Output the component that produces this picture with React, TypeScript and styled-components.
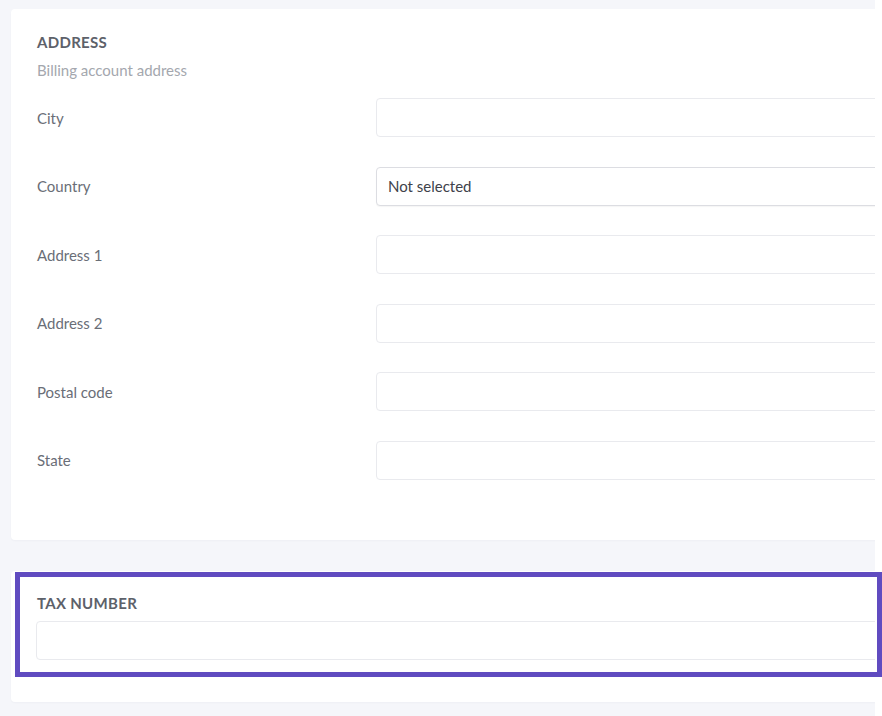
import React from "react";
import styled, { createGlobalStyle } from "styled-components";

const GlobalStyle = createGlobalStyle`
	html, body {
		margin: 0;
		padding: 0;
		background: #ffffff;
	}
	body {
		font-family: Lato, "Open Sans", "Liberation Sans", sans-serif;
		-webkit-font-smoothing: antialiased;
	}
`;

const Root = styled.div`
	position: relative;
	width: 882px;
	height: 716px;
	overflow: hidden;
`;

const Page = styled.div`
	box-sizing: border-box;
	width: 875px;
	height: 716px;
	padding: 9px 0 0 11px;
	background: #f5f6fa;
	overflow: hidden;
	display: flex;
	flex-direction: column;
`;

const Card = styled.section<{ $top: number; $bottom: number; $gap?: number }>`
	box-sizing: border-box;
	margin-right: -40px;
	margin-top: ${(p) => p.$gap ?? 0}px;
	padding: ${(p) => p.$top}px 0 ${(p) => p.$bottom}px 26px;
	background: #ffffff;
	border-radius: 4px;
	box-shadow: 0 1px 2px rgba(30, 40, 70, 0.03);
`;

const Title = styled.h2`
	margin: 0;
	font-size: 15px;
	line-height: 20px;
	font-weight: 700;
	letter-spacing: 0.3px;
	color: #5d616a;
	text-transform: uppercase;
`;

const Subtitle = styled.p`
	margin: 8px 0 18px;
	font-size: 15px;
	line-height: 20px;
	color: #a4a7ae;
`;

const Fields = styled.div`
	display: flex;
	flex-direction: column;
	gap: 29.6px;
`;

const Row = styled.div`
	display: grid;
	grid-template-columns: 339px 1fr;
	align-items: center;
`;

const Label = styled.label`
	font-size: 15px;
	line-height: 20px;
	color: #6a6e77;
`;

const Input = styled.input<{ $strong?: boolean }>`
	box-sizing: border-box;
	height: 39px;
	width: 100%;
	padding: 0 11px;
	border: 1px solid ${(p) => (p.$strong ? "#dcdde2" : "#e9eaee")};
	border-radius: 4px;
	background: #ffffff;
	font-family: inherit;
	font-size: 15px;
	color: #3e424a;
	outline: none;
	box-shadow: ${(p) => (p.$strong ? "0 1px 1px rgba(0,0,0,0.04)" : "none")};
`;

const TaxLabel = styled(Title)`
	margin-bottom: 8px;
`;

const TaxInput = styled(Input)`
	margin-left: -1px;
	width: calc(100% + 1px);
`;

// purple selection frame drawn over the tax number block
const Highlight = styled.div`
	position: absolute;
	left: 15px;
	top: 572px;
	width: 867px;
	height: 105px;
	box-sizing: border-box;
	border: 5px solid #604bc0;
	pointer-events: none;
`;

const fields = [
	{ label: "City", value: "" },
	{ label: "Country", value: "Not selected", strong: true },
	{ label: "Address 1", value: "" },
	{ label: "Address 2", value: "" },
	{ label: "Postal code", value: "" },
	{ label: "State", value: "" },
];

const App = () => {
	return (
		<Root>
			<GlobalStyle />
			<Page>
				<Card $top={23} $bottom={60}>
					<Title>Address</Title>
					<Subtitle>Billing account address</Subtitle>
					<Fields>
						{fields.map((f) => (
							<Row key={f.label}>
								<Label>{f.label}</Label>
								<Input $strong={f.strong} defaultValue={f.value} readOnly />
							</Row>
						))}
					</Fields>
				</Card>
				<Card $top={22} $bottom={42} $gap={31}>
					<TaxLabel>Tax number</TaxLabel>
					<TaxInput readOnly />
				</Card>
			</Page>
			<Highlight />
		</Root>
	);
};

export default App;
